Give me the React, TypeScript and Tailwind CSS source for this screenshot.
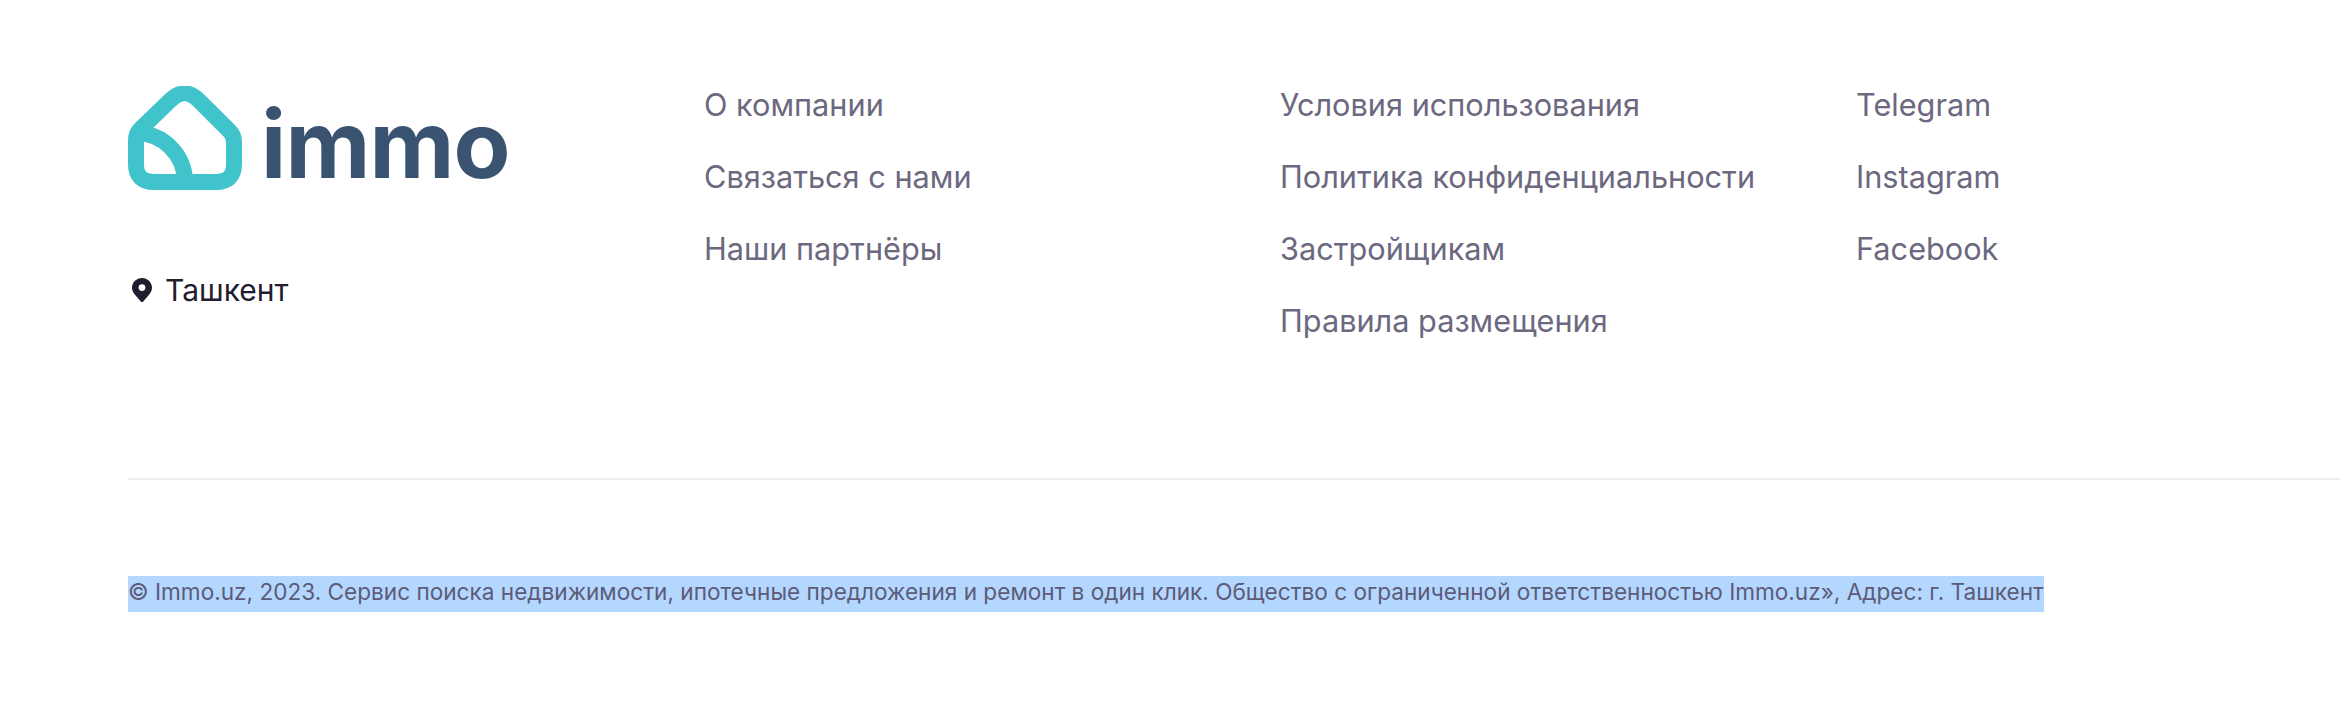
const columns = [
  ["О компании", "Связаться с нами", "Наши партнёры"],
  ["Условия использования", "Политика конфиденциальности", "Застройщикам", "Правила размещения"],
  ["Telegram", "Instagram", "Facebook"],
];

function HouseMark() {
  return (
    <svg width="114" height="104" viewBox="0 0 114 104" fill="none" stroke="#40c3cb" strokeWidth="16" className="shrink-0">
      <path d="M8 54Q8 47 12.5 43L42 14.6Q56.5 0 71 14.6L101.5 45Q106 49.5 106 56L106 78Q106 96 88 96L26 96Q8 96 8 78Z" strokeLinejoin="round" />
      <path d="M8 47A49 49 0 0 1 57 96" />
    </svg>
  );
}

function Pin() {
  return (
    <svg width="20" height="24" viewBox="0 0 20 24" className="shrink-0">
      <path
        fillRule="evenodd"
        fill="#1f1d2e"
        d="M10 0C4.5 0 0 4.3 0 9.7c0 3.2 1.7 5.6 3.6 7.8L8.8 23.4c.6.7 1.8.7 2.4 0l5.2-5.9c1.9-2.2 3.6-4.6 3.6-7.8C20 4.3 15.5 0 10 0Zm0 13a3.4 3.4 0 1 1 0-6.8 3.4 3.4 0 0 1 0 6.8Z"
      />
    </svg>
  );
}

export default function App() {
  return (
    <div className="h-[722px] w-full overflow-hidden bg-white pl-[128px] pt-[86px] font-['Inter',sans-serif]">
      <div className="grid h-[392px] grid-cols-[576px_576px_576px_1fr] items-start">
        <div className="flex flex-col">
          <div className="flex items-start gap-[19px]">
            <HouseMark />
            <span className="mt-[8px] text-[93px] font-bold leading-[100px] tracking-[-0.8px] text-[#3a5370]">immo</span>
          </div>
          <div className="mt-[78px] flex items-center gap-[13px] pl-[4px] text-[30px] leading-[36px] text-[#1f1d2e]">
            <Pin />
            <span>Ташкент</span>
          </div>
        </div>
        {columns.map((links, i) => (
          <ul key={i} className="mt-[1px] flex flex-col gap-[36px]">
            {links.map((link) => (
              <li key={link} className="whitespace-nowrap text-[30.7px] leading-[36px] text-[#6b6880]">
                {link}
              </li>
            ))}
          </ul>
        ))}
      </div>
      <div className="h-[2px] bg-[#ebebf2]" />
      <div className="pt-[96px]">
        <span className="inline-block whitespace-nowrap bg-[#b3d7ff] pb-[5px] text-[22.6px] leading-[31px] text-[#5d5b78]">
          © Immo.uz, 2023. Сервис поиска недвижимости, ипотечные предложения и ремонт в один клик. Общество с ограниченной ответственностью Immo.uz», Адрес: г. Ташкент
        </span>
      </div>
    </div>
  );
}
